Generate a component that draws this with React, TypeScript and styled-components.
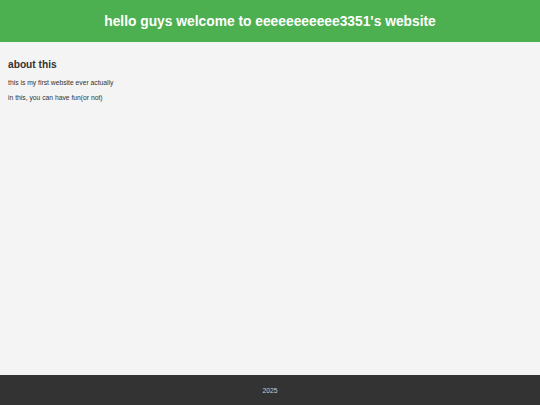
import React from 'react';
import styled, { createGlobalStyle } from 'styled-components';

const GlobalStyle = createGlobalStyle`
  html, body {
    margin: 0;
    padding: 0;
    height: 100%;
  }
  body {
    font-family: 'Liberation Sans', Arial, sans-serif;
    background: #f4f4f4;
    color: #333;
  }
  #root {
    height: 100%;
  }
`;

export default function App() {
  return (
    <>
      <GlobalStyle />
      <Page>
        <Header>
          <Title>hello guys welcome to eeeeeeeeeee3351's website</Title>
        </Header>
        <Main>
          <Section>
            <Heading>about this</Heading>
            <Text>this is my first website ever actually</Text>
            <Text>in this, you can have fun(or not)</Text>
          </Section>
        </Main>
        <Footer>
          <FooterText>2025</FooterText>
        </Footer>
      </Page>
    </>
  );
}

const Page = styled.div`
  display: flex;
  flex-direction: column;
  min-height: 100vh;
`;
const Header = styled.header`
  background: #4caf50;
  height: 42px;
  display: flex;
  align-items: center;
  justify-content: center;
`;
const Title = styled.h1`
  margin: 0;
  color: #fff;
  font-size: 13.8px;
  font-weight: bold;
`;
const Main = styled.main`
  flex: 1;
  padding: 17px 8px;
`;
const Section = styled.section``;
const Heading = styled.h2`
  margin: 0 0 8px;
  font-size: 10.2px;
  line-height: 12px;
  font-weight: bold;
  color: #333;
`;
const Text = styled.p`
  margin: 0 0 7px;
  font-size: 6.75px;
  line-height: 8px;
  color: #333;
`;
const Footer = styled.footer`
  background: #333;
  height: 30px;
  display: flex;
  align-items: center;
  justify-content: center;
`;
const FooterText = styled.p`
  margin: 0;
  color: #ccc;
  font-size: 6.75px;
`;
